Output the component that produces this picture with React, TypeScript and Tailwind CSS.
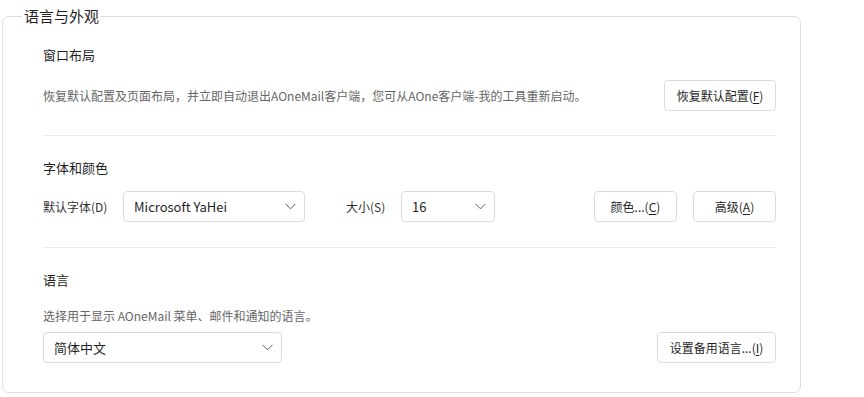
import React from "react";

const FONT = { fontFamily: '"Noto Sans CJK SC", "Noto Sans", sans-serif' };

function Chevron() {
  return (
    <svg width="11" height="7" viewBox="0 0 11 7" className="shrink-0">
      <polyline points="0.5,0.8 5.5,5.8 10.5,0.8" fill="none" stroke="#5c5c5c" strokeWidth="1" />
    </svg>
  );
}

function Select({ value, width }: { value: string; width: string }) {
  return (
    <div
      className={`${width} h-[31px] flex items-center justify-between pl-[10px] pr-[8px] border border-[#dcdcdc] rounded-[4px] bg-white text-[13px] text-[#1f1f1f]`}
    >
      <span>{value}</span>
      <Chevron />
    </div>
  );
}

function Btn({ children, width }: { children: React.ReactNode; width: string }) {
  return (
    <button
      className={`${width} h-[31px] flex items-center justify-center border border-[#dcdcdc] rounded-[4px] bg-white text-[12px] text-[#1f1f1f]`}
    >
      {children}
    </button>
  );
}

function U({ c }: { c: string }) {
  return <span className="underline underline-offset-[2px]">{c}</span>;
}

export default function App() {
  return (
    <div className="w-[864px] h-[397px] bg-white pl-[2px] pt-[6px]" style={FONT}>
      <fieldset className="w-[799px] border border-[#dedede] rounded-[7px]">
        <legend className="ml-[19px] px-[2px] text-[15px] leading-[20px] text-[#1f1f1f]">语言与外观</legend>

        <div className="pl-[40px] pr-[24px] pb-[29px]">
          <div className="pt-[19px]">
            <div className="text-[13px] leading-[20px] text-[#1f1f1f]">窗口布局</div>
            <div className="mt-[15px] flex items-center justify-between">
              <div className="text-[12px] leading-[18px] text-[#666666]">
                恢复默认配置及页面布局，并立即自动退出AOneMail客户端，您可从AOne客户端-我的工具重新启动。
              </div>
              <Btn width="w-[112px]">
                恢复默认配置(<U c="F" />)
              </Btn>
            </div>
          </div>

          <div className="mt-[24px] h-px bg-[#ececec]" />

          <div className="pt-[22px]">
            <div className="text-[13px] leading-[20px] text-[#1f1f1f]">字体和颜色</div>
            <div className="mt-[13px] flex items-center">
              <div className="w-[80px] text-[12px] text-[#333333]">默认字体(D)</div>
              <Select value="Microsoft YaHei" width="w-[182px]" />
              <div className="ml-[41px] w-[55px] text-[12px] text-[#333333]">大小(S)</div>
              <Select value="16" width="w-[94px]" />
              <div className="ml-auto flex gap-[16px]">
                <Btn width="w-[83px]">
                  颜色...(<U c="C" />)
                </Btn>
                <Btn width="w-[83px]">
                  高级(<U c="A" />)
                </Btn>
              </div>
            </div>
          </div>

          <div className="mt-[25px] h-px bg-[#ececec]" />

          <div className="pt-[22px]">
            <div className="text-[13px] leading-[20px] text-[#1f1f1f]">语言</div>
            <div className="mt-[17px] text-[12px] leading-[18px] text-[#666666]">
              选择用于显示 AOneMail 菜单、邮件和通知的语言。
            </div>
            <div className="mt-[7px] flex items-center justify-between">
              <Select value="简体中文" width="w-[239px]" />
              <Btn width="w-[119px]">
                设置备用语言...(<U c="I" />)
              </Btn>
            </div>
          </div>
        </div>
      </fieldset>
    </div>
  );
}
